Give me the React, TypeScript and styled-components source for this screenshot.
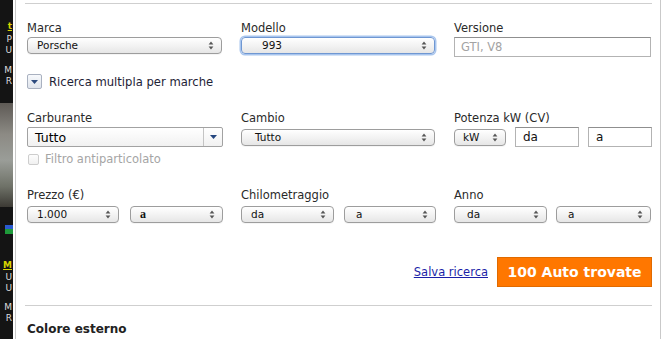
import styled, { createGlobalStyle } from "styled-components";

const GlobalStyle = createGlobalStyle`
  html, body {
    margin: 0;
    padding: 0;
    background: #fff;
  }
  body {
    font-family: "DejaVu Sans", Verdana, sans-serif;
  }
`;

const UpDown = () => (
  <svg width="6" height="9" viewBox="0 0 6 9">
    <path d="M3 0.6 L5.4 3.6 H0.6 Z" fill="#555" />
    <path d="M3 8.4 L5.4 5.4 H0.6 Z" fill="#555" />
  </svg>
);

const DownTriangle = ({ color }: { color: string }) => (
  <svg width="7" height="4" viewBox="0 0 7 4">
    <path d="M0 0 H7 L3.5 4 Z" fill={color} />
  </svg>
);

type SelectProps = {
  value: string;
  width: number;
  indent?: number;
  focused?: boolean;
  serif?: boolean;
};

const SelectBox = ({ value, width, indent, focused, serif }: SelectProps) => (
  <Select $width={width} $indent={indent} $focused={focused}>
    <SelectValue $serif={serif}>{value}</SelectValue>
    <UpDown />
  </Select>
);

const App = () => {
  return (
    <>
      <GlobalStyle />
      <Page>
        <Strip>
          <StripWord $top={21} $color="#d8d400" $bold $underline>
            t
          </StripWord>
          <StripWord $top={2} $color="#ddd">
            P
          </StripWord>
          <StripWord $top={0} $color="#ddd">
            U
          </StripWord>
          <StripWord $top={9} $color="#ddd">
            M
          </StripWord>
          <StripWord $top={0} $color="#ddd">
            R
          </StripWord>
          <StripPhoto />
          <StripBadge />
          <StripWord $top={26} $color="#d8d400" $bold $underline>
            M
          </StripWord>
          <StripWord $top={1} $color="#ddd">
            U
          </StripWord>
          <StripWord $top={0} $color="#ddd">
            U
          </StripWord>
          <StripWord $top={8} $color="#ddd">
            M
          </StripWord>
          <StripWord $top={0} $color="#ddd">
            R
          </StripWord>
        </Strip>

        <Panel>
          <Rule />
          <Form>
            <Row $top={16}>
              <Field>
                <Label>Marca</Label>
                <SelectBox value="Porsche" width={195} />
              </Field>
              <Field>
                <Label>Modello</Label>
                <SelectBox value="993" width={194} indent={21} focused />
              </Field>
              <Field>
                <Label>Versione</Label>
                <TextInput $width={197} $placeholder>
                  GTI, V8
                </TextInput>
              </Field>
            </Row>

            <MultiRow>
              <ToggleButton>
                <DownTriangle color="#2c4a7e" />
              </ToggleButton>
              Ricerca multipla per marche
            </MultiRow>

            <Row $top={21}>
              <Field>
                <Label>Carburante</Label>
                <Combo>
                  <ComboValue>Tutto</ComboValue>
                  <ComboArrow>
                    <DownTriangle color="#24467f" />
                  </ComboArrow>
                </Combo>
                <CheckRow>
                  <CheckBox />
                  Filtro antiparticolato
                </CheckRow>
              </Field>
              <Field>
                <Label>Cambio</Label>
                <ControlLine>
                  <SelectBox value="Tutto" width={194} indent={14} />
                </ControlLine>
              </Field>
              <Field>
                <Label>Potenza kW (CV)</Label>
                <ControlLine>
                  <SelectBox value="kW" width={52} indent={9} />
                  <TextInput $width={64}>da</TextInput>
                  <TextInput $width={64}>a</TextInput>
                </ControlLine>
              </Field>
            </Row>

            <Row $top={21}>
              <Field>
                <Label $gap={3}>Prezzo (€)</Label>
                <Pair>
                  <SelectBox value="1.000" width={92} />
                  <SelectBox value="a" width={93} serif />
                </Pair>
              </Field>
              <Field>
                <Label $gap={3}>Chilometraggio</Label>
                <Pair>
                  <SelectBox value="da" width={93} />
                  <SelectBox value="a" width={92} indent={12} />
                </Pair>
              </Field>
              <Field>
                <Label $gap={3}>Anno</Label>
                <Pair>
                  <SelectBox value="da" width={93} indent={13} />
                  <SelectBox value="a" width={95} indent={12} />
                </Pair>
              </Field>
            </Row>

            <Actions>
              <SaveLink href="#">Salva ricerca</SaveLink>
              <ResultButton>100 Auto trovate</ResultButton>
            </Actions>
          </Form>
          <Rule $top={18} />
          <SectionTitle>Colore esterno</SectionTitle>
        </Panel>
      </Page>
    </>
  );
};

const Page = styled.div`
  display: flex;
  width: 668px;
  height: 339px;
  overflow: hidden;
  background: #fff;
`;

const Strip = styled.div`
  width: 13px;
  flex-shrink: 0;
  background: #141414;
  display: flex;
  flex-direction: column;
  overflow: hidden;
`;

const StripWord = styled.div<{
  $top: number;
  $color: string;
  $bold?: boolean;
  $underline?: boolean;
}>`
  margin-top: ${(p) => p.$top}px;
  display: flex;
  justify-content: flex-end;
  padding-right: 1px;
  white-space: nowrap;
  font-size: 9px;
  line-height: 11px;
  color: ${(p) => p.$color};
  font-weight: ${(p) => (p.$bold ? 700 : 400)};
  text-decoration: ${(p) => (p.$underline ? "underline" : "none")};
`;

const StripPhoto = styled.div`
  margin-top: 16px;
  height: 104px;
  background: linear-gradient(
    180deg,
    #5e5a55 0%,
    #8c8a84 30%,
    #9a9d98 55%,
    #6f7268 80%,
    #3c3a34 100%
  );
`;

const StripBadge = styled.div`
  margin-top: 18px;
  margin-left: 5px;
  width: 8px;
  height: 9px;
  background: linear-gradient(180deg, #2a5ad0 0%, #2a5ad0 50%, #1e9a3a 50%);
`;

const Panel = styled.div`
  box-sizing: border-box;
  margin-left: 2px;
  width: 646px;
  height: 339px;
  flex-shrink: 0;
  padding: 3px 8px 0 9px;
  border-left: 1px solid #c9c9c9;
  border-right: 1px solid #c9c9c9;
`;

const Rule = styled.div<{ $top?: number }>`
  height: 1px;
  margin-top: ${(p) => p.$top ?? 0}px;
  background: #cfcfcf;
`;

const Form = styled.div`
  padding: 0 0 0 2px;
`;

const Row = styled.div<{ $top: number }>`
  display: grid;
  grid-template-columns: 196px 195px 197px;
  column-gap: 18px;
  margin-top: ${(p) => p.$top}px;
`;

const Field = styled.div`
  display: flex;
  flex-direction: column;
`;

const Label = styled.div<{ $gap?: number }>`
  font-size: 11.5px;
  line-height: 16px;
  color: #2a2a2a;
  margin-bottom: ${(p) => p.$gap ?? 1}px;
`;

const Select = styled.div<{
  $width: number;
  $indent?: number;
  $focused?: boolean;
}>`
  box-sizing: border-box;
  width: ${(p) => p.$width}px;
  height: 17px;
  flex-shrink: 0;
  display: flex;
  align-items: center;
  justify-content: space-between;
  padding: 0 7px 0 ${(p) => (p.$indent ?? 10) - 1}px;
  border: 1px solid ${(p) => (p.$focused ? "#6f97d2" : "#9d9d9d")};
  border-radius: 4px;
  background: linear-gradient(180deg, #ffffff 0%, #f3f3f3 50%, #e6e6e6 100%);
  box-shadow: ${(p) =>
    p.$focused ? "0 0 0 1.5px #a8c5ee" : "0 1px 0 rgba(0, 0, 0, 0.04)"};
`;

const SelectValue = styled.span<{ $serif?: boolean }>`
  font-family: ${(p) =>
    p.$serif
      ? '"Liberation Serif", "Times New Roman", serif'
      : '"DejaVu Sans", Verdana, sans-serif'};
  font-size: ${(p) => (p.$serif ? "12px" : "10.5px")};
  font-weight: ${(p) => (p.$serif ? 700 : 400)};
  color: #111;
  line-height: 15px;
`;

const TextInput = styled.div<{ $width: number; $placeholder?: boolean }>`
  box-sizing: border-box;
  width: ${(p) => p.$width}px;
  height: 20px;
  flex-shrink: 0;
  display: flex;
  align-items: center;
  padding-left: ${(p) => (p.$placeholder ? 6 : 7)}px;
  border: 1px solid #b3b3b3;
  border-top-color: #8f8f8f;
  background: #fff;
  font-size: ${(p) => (p.$placeholder ? "11.5px" : "12px")};
  color: ${(p) => (p.$placeholder ? "#a3a3a3" : "#111")};
`;

const MultiRow = styled.div`
  display: flex;
  align-items: center;
  gap: 7px;
  margin-top: 17px;
  height: 15px;
  font-size: 11.6px;
  color: #1d2236;
`;

const ToggleButton = styled.div`
  box-sizing: border-box;
  width: 15px;
  height: 15px;
  display: flex;
  align-items: center;
  justify-content: center;
  border: 1px solid #a9b1c0;
  border-radius: 2px;
  background: linear-gradient(180deg, #f7f9fc 0%, #dfe4ec 100%);
`;

const Combo = styled.div`
  box-sizing: border-box;
  width: 196px;
  height: 20px;
  display: flex;
  border: 1px solid #a2a2a2;
  border-radius: 2px;
  background: linear-gradient(180deg, #ffffff 0%, #f1f1f1 100%);
`;

const ComboValue = styled.div`
  flex: 1;
  display: flex;
  align-items: center;
  padding-left: 7px;
  font-size: 12.5px;
  color: #000;
`;

const ComboArrow = styled.div`
  width: 18px;
  display: flex;
  align-items: center;
  justify-content: center;
  border-left: 1px solid #c4c4c4;
`;

const CheckRow = styled.div`
  display: flex;
  align-items: center;
  gap: 6px;
  margin-top: 5px;
  margin-left: 1px;
  height: 14px;
  font-size: 11.5px;
  color: #a5a5a5;
`;

const CheckBox = styled.div`
  box-sizing: border-box;
  width: 11px;
  height: 11px;
  border: 1px solid #cdcdcd;
  border-radius: 2px;
  background: linear-gradient(180deg, #fdfdfd, #f0f0f0);
`;

const ControlLine = styled.div`
  display: flex;
  align-items: center;
  height: 20px;
  gap: 9px;
`;

const Pair = styled.div`
  display: flex;
  justify-content: space-between;
`;

const Actions = styled.div`
  display: flex;
  justify-content: flex-end;
  align-items: center;
  gap: 9px;
  margin-top: 34px;
`;

const SaveLink = styled.a`
  font-size: 11.5px;
  color: #1b1fa8;
  text-decoration: underline;
`;

const ResultButton = styled.button`
  box-sizing: border-box;
  width: 155px;
  height: 30px;
  border: 1px solid #e06a00;
  border-radius: 0;
  background: #ff7700;
  color: #fff;
  font-family: "DejaVu Sans", Verdana, sans-serif;
  font-size: 14px;
  font-weight: 700;
  padding: 0;
`;

const SectionTitle = styled.div`
  margin-top: 15px;
  padding-left: 2px;
  font-size: 12px;
  line-height: 16px;
  font-weight: 700;
  color: #222;
`;

export default App;
